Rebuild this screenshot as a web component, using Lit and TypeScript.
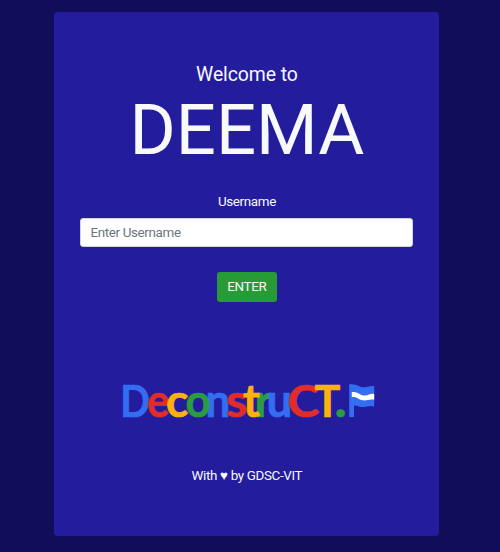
import { LitElement, html, css, svg } from "lit";
import { customElement } from "lit/decorators.js";

// [character, left, advance width, colour, font size]
const LETTERS: [string, number, number, string, number][] = [
  ["D", -2.8, 29.5, "#346df1", 44.5],
  ["e", 24, 22, "#e02d2c", 45.5],
  ["c", 43, 22, "#fcb10b", 45.5],
  ["n", 82.5, 24.5, "#346df1", 45.5],
  ["o", 62.5, 25, "#2b9d41", 45.5],
  ["s", 103, 21, "#e02d2c", 45.5],
  ["r", 131.5, 17.5, "#2b9d41", 45.5],
  ["t", 120, 16.5, "#fcb10b", 45.5],
  ["u", 143.5, 25.5, "#346df1", 45.5],
  ["C", 164.5, 31.5, "#e02d2c", 44.5],
  ["T", 191.5, 25.5, "#fcb10b", 44.5],
  [".", 211.6, 12, "#2b9d41", 50],
];

@customElement("deconstruct-logo")
export class DeconstructLogo extends LitElement {
  static styles = css`
    :host { display: block; width: 254px; height: 40px; }
    svg { display: block; overflow: visible; }
    text { font-family: Lato, sans-serif; font-weight: 700; stroke-width: 0.7px; }
  `;
  render() {
    return html`<svg width="254" height="40" viewBox="0 0 254 40">
      ${LETTERS.map(([c, x, w, fill, size]) => svg`<text x=${x} y="36.6" font-size=${size} fill=${fill}
        stroke=${fill} textLength=${w} lengthAdjust="spacingAndGlyphs">${c}</text>`)}
      <path fill="#346df1" d="M226.2 4.5 C233 3 236 7.3 241 7.3 C245.5 7.3 247 5.5 251.2 6.3 V26.5 C245 24.5 242 28.5 236 26.5 C234 25.7 233 25.3 231 25.5 V37 H226.2Z"/>
      <path fill="#fff" d="M228.8 12.2 C235 11 237 16 242 15.6 C246 15.3 247 13.2 251.2 14 V19.6 C246 18.8 244 21 239.5 20.3 C235 19.6 234 16.5 228.8 17.2Z"/>
    </svg>`;
  }
}

@customElement("app-root")
export class AppRoot extends LitElement {
  static styles = css`
    :host {
      display: block; box-sizing: border-box; height: 552px; padding: 12.4px 60.6px 0 54px;
      background: #120d59; color: #f8f9fa; font-family: Roboto, sans-serif;
      font-size: 13.4px; letter-spacing: -0.34px;
    }
    .card {
      box-sizing: border-box; height: 524px; padding: 51px 26px 0 26.4px; border-radius: 4px;
      background: #231d9e; display: flex; flex-direction: column; align-items: center;
    }
    .welcome { font-size: 19.4px; line-height: 24px; letter-spacing: -0.08px; }
    h1 { margin: 1px 0 0; font-size: 70.6px; line-height: 84px; font-weight: 400; letter-spacing: 0; }
    label { margin-top: 19.5px; line-height: 19px; }
    input {
      box-sizing: border-box; width: 100%; height: 29px; margin-top: 7px; padding: 0 9px;
      border: 1px solid #ced4da; border-radius: 3px; background: #fff;
      font: inherit; letter-spacing: inherit; color: #495057;
    }
    input::placeholder { color: #6c757d; opacity: 1; }
    button {
      height: 30px; width: 59.5px; margin-top: 25px; padding: 0; border: 0; border-radius: 3px;
      background: #269b36; color: #f8f9fa; font: inherit; letter-spacing: inherit;
    }
    deconstruct-logo { margin: 78.2px 0 0 6px; }
    .footer { margin-top: 46px; line-height: 19px; }
  `;
  render() {
    return html`<main class="card">
      <div class="welcome">Welcome to</div>
      <h1>DEEMA</h1>
      <label for="username">Username</label>
      <input id="username" placeholder="Enter Username" />
      <button>ENTER</button>
      <deconstruct-logo></deconstruct-logo>
      <div class="footer">With ♥ by GDSC-VIT</div>
    </main>`;
  }
}
